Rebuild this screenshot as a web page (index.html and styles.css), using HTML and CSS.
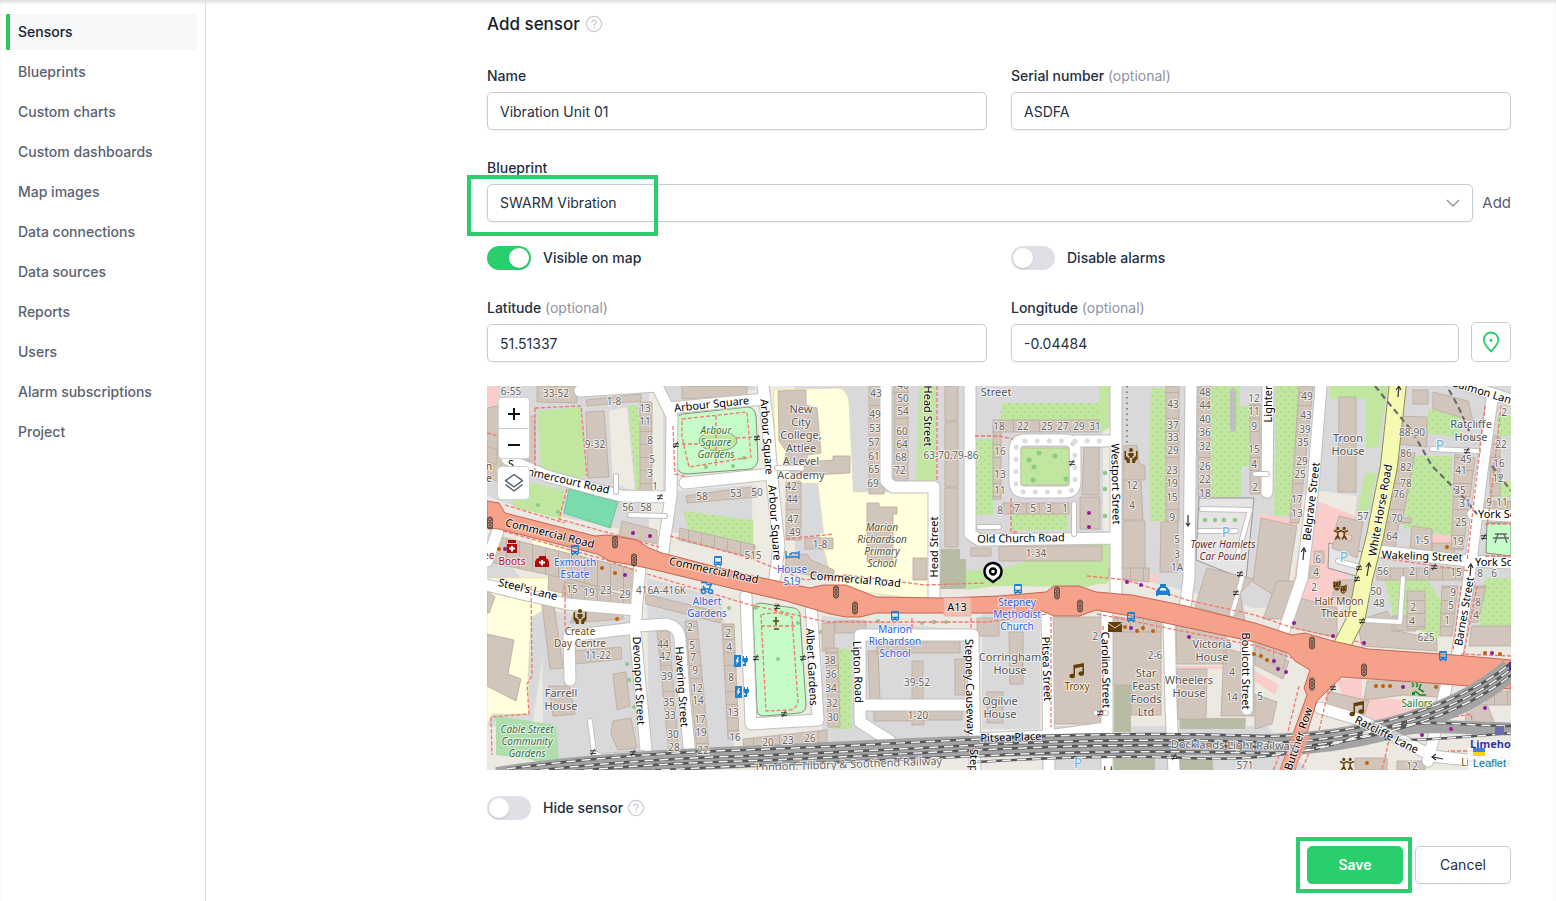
FILE: index.html
```html
<!DOCTYPE html>
<html lang="en">
<head>
<meta charset="utf-8">
<meta name="viewport" content="width=device-width, initial-scale=1">
<title>Add sensor</title>
<link rel="stylesheet" href="styles.css">
</head>
<body>
<div class="layout">
  <nav class="sidebar" aria-label="Settings">
    <a class="nav-link active" href="#sensors" aria-current="page">Sensors</a>
    <a class="nav-link" href="#blueprints">Blueprints</a>
    <a class="nav-link" href="#charts">Custom charts</a>
    <a class="nav-link" href="#dashboards">Custom dashboards</a>
    <a class="nav-link" href="#images">Map images</a>
    <a class="nav-link" href="#connections">Data connections</a>
    <a class="nav-link" href="#sources">Data sources</a>
    <a class="nav-link" href="#reports">Reports</a>
    <a class="nav-link" href="#users">Users</a>
    <a class="nav-link" href="#alarms">Alarm subscriptions</a>
    <a class="nav-link" href="#project">Project</a>
  </nav>
  <main class="content">
    <form class="sensor-form">
      <header class="form-header">
        <h1 class="title">Add sensor</h1>
        <svg class="help" viewBox="0 0 18 18" aria-hidden="true"><circle cx="9" cy="9" r="7.6"/><path d="M6.9 7.2a2.1 2.1 0 1 1 3.2 1.8c-.8.5-1.1.8-1.1 1.6M9 12.3v.9"/></svg>
      </header>

      <div class="columns">
        <div class="field">
          <label class="label" for="name">Name</label>
          <input class="input" id="name" type="text" value="Vibration Unit 01">
        </div>
        <div class="field">
          <label class="label" for="serial">Serial number <span class="optional">(optional)</span></label>
          <input class="input" id="serial" type="text" value="ASDFA">
        </div>
      </div>

      <div class="field">
        <label class="label" for="blueprint">Blueprint</label>
        <div class="select-row">
          <div class="select-wrap">
            <select class="input select" id="blueprint"><option>SWARM Vibration</option></select>
            <svg class="chevron" viewBox="0 0 14 8" aria-hidden="true"><path d="M1 1l6 6 6-6"/></svg>
            <span class="highlight highlight-select"></span>
          </div>
          <a class="add-link" href="#add">Add</a>
        </div>
      </div>

      <div class="columns toggles">
        <label class="toggle"><input class="switch" type="checkbox" role="switch" checked>Visible on map</label>
        <label class="toggle"><input class="switch" type="checkbox" role="switch">Disable alarms</label>
      </div>

      <div class="columns coordinates">
        <div class="field">
          <label class="label" for="lat">Latitude <span class="optional">(optional)</span></label>
          <input class="input" id="lat" type="text" value="51.51337">
        </div>
        <div class="locate-row">
          <div class="field">
            <label class="label" for="lng">Longitude <span class="optional">(optional)</span></label>
            <input class="input" id="lng" type="text" value="-0.04484">
          </div>
          <button class="locate" type="button" aria-label="Pick location"><svg class="pin-icon" viewBox="0 0 20 22" aria-hidden="true"><path d="M10 20.5C6.5 16.8 2.7 13.3 2.7 8.8a7.3 7.3 0 0 1 14.600 0c0 4.500-3.800 8-7.300 11.700z"/><circle cx="10" cy="9.200" r="1.500"/></svg></button>
        </div>
      </div>

      <div class="map">
<svg class="map-canvas" viewBox="0 0 1024 384" preserveAspectRatio="xMidYMid slice" role="img" aria-label="Street map">
<defs>
  <pattern id="garden" width="8" height="8" patternUnits="userSpaceOnUse"><rect width="8" height="8" fill="#c1e6a0"/><circle cx="2" cy="2" r=".6" fill="#7dbb69"/><circle cx="6" cy="6" r=".6" fill="#7dbb69"/></pattern>
  <pattern id="terraceV" width="40" height="13" patternUnits="userSpaceOnUse"><rect width="40" height="13" fill="#d1c5bc"/><path d="M0 6.500h40" stroke="#b9a99c" stroke-width=".8"/></pattern>
  <pattern id="terraceH" width="13" height="40" patternUnits="userSpaceOnUse"><rect width="13" height="40" fill="#d1c5bc"/><path d="M6.500 0v40" stroke="#b9a99c" stroke-width=".8"/></pattern>
  <g id="gate"><path d="M-3-1.200h6M-3 1.400h6M-1.600 3.200L1.600-3.200" fill="none" stroke="#222" stroke-width=".9"/></g>
  <g id="signal"><rect x="-2.300" y="-6" width="4.600" height="12" rx="2" fill="none" stroke="#4a4038" stroke-width="1"/><circle cy="-3.500" r="1.300" fill="none" stroke="#4a4038"/><circle r="1.300" fill="none" stroke="#4a4038"/><circle cy="3.500" r="1.300" fill="none" stroke="#4a4038"/></g>
  <g id="bus" fill="#1a80d2"><path fill-rule="evenodd" d="M-4-3.600Q-4-5-2.600-5h5.200Q4-5 4-3.600V4H3v1.300H1.600V4h-3.200v1.300H-3V4h-1zM-2.800-3v3.800h5.600V-3zM-2.800 2v1h1.300V2zM1.500 2v1h1.300V2z"/></g>
  <g id="music" fill="#623f07"><path d="M-3.500-5L7-7V3.500a2.800 2.200 0 1 1-1.600-1.900V-3.200L-2-1.800V6a2.800 2.200 0 1 1-1.500-1.900z"/></g>
  <g id="hands" fill="#623f07"><circle cy="-5" r="2"/><path d="M-2.600-2h5.200v3H1.500v2h-3V1h-1.100zM-6.500-4h1.500v5l3.800 3v4h-3V6l-2.300-2zM6.500-4H5v5L1.200 4v4h3V6l2.300-2z"/></g>
  <g id="people" fill="none" stroke="#623f07" stroke-width="1.500"><circle cx="-3.200" cy="-4.600" r=".8"/><circle cx="3.200" cy="-4.600" r=".8"/><path d="M-7-2.500L-3.200-.800 0-2.500 3.200-.800 7-2.500M-3.200-1.500v4l-2.500 4M-3.200 2.500l2 4M3.200-1.500v4l-2 4M3.200 2.500l2.500 4"/></g>
  <g id="charge" fill="#1a80d2"><path fill-rule="evenodd" d="M-7-6h7V6h-7zM-3.500-4L-5.700.700h1.500L-5 4.200-1.600-1h-1.500l1-3z"/><path d="M2-5h1v2h2v-2h1v2h1v3L5 2v3H2V3h1.500V2L1.500 0v-3H2z"/></g>
</defs>
<rect width="1024" height="384" fill="#d9d8da"/>

<g fill="#eeebe3">
  <path d="M0 110L18 117 60 128 170 150 190 105 188 30 260 5 285 0 300 120 303 180 420 198 600 188 660 195 768 222 800 220 812 110 835 105 870 110 855 230 1024 255V384H820L780 340H560V384H0V340L45 340 62 230 40 200 0 150z" opacity=".85"/>
  <path d="M162 0h14v170h-14zM268 0h40v200h-40zM616 40h10v105h-10zM122 25l18-4 8 85-22-10z"/>
</g>
<g fill="#d9d8da">
  <path d="M190 105l75-6v65l-80-18zM55 225l90 6 8 140-85 5-12-35zM160 192l75 20 12 150-85 8zM335 230l150 15v115l-120 5-85 5 55-25zM495 225h58v118h-58zM304 98h22l12 62-30-6zM790 102h5v-90h-5zM60 72v-72h40v72z"/>
</g>
<g fill="#ffffde" stroke="#e9e29b" stroke-width=".7">
  <path d="M287 4l66-2q8 4 9 14l5 90h75v108l-95-12-16-60-18-48-25-1z"/>
  <path d="M0 192h78l-3 20-31 20-3 58 1 38H5L0 340zM44 150l60 24-10 20-45-12z"/>
</g>
<path fill="#d9d8da" d="M304 97h27l6 50-30 6zM328 0h54v106h-16l-4-90q-1-10-9-14l-25 1z"/>
<g fill="#fbcdca">
  <path d="M0 0h12l-4 82H2l4-30H0zM823 112l45 18-8 70-12 30-48-8zM850 294l25-2v18l78 8v10l-50 6-15 15-20-4zM826 170h10l-10 40h-16zM645 188h25v8h-38zM612 270l25-20 30 10v5zM690 280h55v3h-55zM768 285l24 14-4 10-20-14zM945 149h24v10h-24z"/>
  <path d="M773 128l38 6v6l-40-4z"/>
</g>

<g fill="url(#garden)">
  <path d="M141 19h9l6 36 7 49-14 2zM196 125l70 9v26l-62-8zM349 263h16v80h-18zM515 17h97v17h-99zM489 53h17v76h-17zM525 128h56v16h-58zM664 2h17v133h-17l-2-50zM724 0h29v20h9v60h-8v31h-30zM789 0h26l-12 130h-16zM941 23l31 6v22l-31-3zM925 70h40v80l-48-8zM897 192h42l24 35-12 26-44-20zM998 192h26v60h-33zM1004 95h20v16h-20zM1010 30h14v20h-14z"/>
</g>
<g fill="#c1e6a0">
  <path d="M50 25l44-4 5 68-14 8-31-16z"/><path d="M28 92l50 13-4 28-48-12zM432 0h17v98h-20zM843 0h58l-10 62h-12V13h-36zM878 87h12l-9 38h-11zM478 185l34-2 106-28h4v40l-22 6-90-1-30 4-4-15z"/>
  <path d="M480 184h140v14H480zM612 0h10v42l-10 6z"/>
</g>
<path d="M9 330l60 9 4 46-30-12-34-4z" fill="#aedfab"/>
<path d="M82 103l49 13-8 26-46-15z" fill="#79dbae" stroke="#58b98c" stroke-width=".7"/>
<g fill="#b9bca4"><path d="M453 163h20v10h6v30h-26zM627 299h17v47h-17zM692 332h67l-1 11h-65zM627 371h41v13h-41zM684 371h42v13h-42z"/></g>

<g fill="#c6fcc9" stroke="#6f8a70" stroke-width=".9">
  <path d="M196 28l65-7q7 1 8 9l2 43q-1 8-7 10l-64 5q-9 0-11-9l-2-38q0-11 9-13z"/>
  <path d="M273 217l34 5q6 2 6 7l6 90q0 7-7 8l-35 3q-7 0-7-7l-4-98q0-7 7-8z"/>
  <path d="M1000 137h24v33l-25-3z"/>
</g>
<ellipse cx="231" cy="55" rx="19" ry="10" fill="#c1e6a0" stroke="#86a878"/>
<g fill="#8cc98a"><circle cx="219" cy="81" r="2"/><circle cx="246" cy="80" r="2"/><circle cx="257" cy="72" r="2"/><circle cx="51" cy="119" r="2"/><circle cx="71" cy="126" r="2"/><circle cx="102" cy="134" r="2"/><circle cx="123" cy="140" r="2"/><circle cx="269" cy="222" r="2"/><circle cx="291" cy="273" r="2"/><circle cx="311" cy="237" r="2"/><circle cx="333" cy="246" r="2"/><circle cx="140" cy="278" r="2"/><circle cx="142" cy="294" r="2"/><circle cx="147" cy="321" r="2"/><circle cx="242" cy="222" r="2"/><circle cx="391" cy="235" r="2"/><circle cx="435" cy="237" r="2"/><circle cx="447" cy="236" r="2"/><circle cx="459" cy="236" r="2"/><circle cx="618" cy="87" r="2.300"/><circle cx="618" cy="103" r="2.300"/><circle cx="618" cy="130" r="2.300"/></g>

<path fill="#e6e4e5" stroke="#777" stroke-width=".7" d="M712 112h55l-8 82-50-20zM842 157l40 11-6 24-35-10z"/>
<g fill="#d1c5bc" stroke="#b9a99c" stroke-width=".8">
  <path d="M0 22l14-3-5 60-9-4zM0 60l16 6-3 30-13-4zM50 0h40v17l-40-1zM36 30h12v45H36zM99 14l55-6v7l-54 5zM99 26l18-1 5 66-21 1zM135 135l35 9v14l-38-8zM195 0h65v10l-65 3zM199 110l56-8 15-1v10l-70 6z"/>
  <path d="M291 5l28-1v15l11 3 4 45-14 2v7l26-2v-4h17v17l-56 3-10-10 2-15-7-10zM380 117h12v4h18v7h-4v48H380zM318 152h28v11h-28zM300 170l20-2 4 6 23 10v9l-50-8z"/>
  <path d="M458 0h13v35h-13zM458 36h13v65h-13zM458 102h13v59h-13zM484 162h20v8h-20zM597 61h15v48h-17zM593 111h20v32h-20zM512 160h103v15h-103zM637 60l13-1 2 18 6 3v14h-22zM636 95h18l2 39h-20zM636 135h22v56h-22zM674 136h17v50h-18zM426 172h14v22h-14z"/>
  <path d="M852 11h17v95h-18zM774 132l36 8-9 55-16 13-19-12zM720 182l47 11-14 14 5 28-50-14zM852 130l24 6-6 36-25-10 4-12 15 5 1-5-17-6zM827 165h10v12h-10zM822 180h10v12h-10zM926 4h15v14h-15zM946 6l35 9 5 20-40-12zM955 190h20v-8h-22zM925 140l20 3v22l-22-3zM945 157h24l-2 10h-22zM910 30l30 1v30l-31-3z"/>
  <path d="M0 204l8 7-6 16H0zM0 248l27 6-6 34 13 5-5 22-29-15zM55 219h12l9 63-13 1zM90 222l46 3v8l-53 4zM87 265l47-4 1 12-46 5zM126 288l13-2 4 34-13 4zM126 335l18-3 6 30-19 2-7-16zM62 300h20l6 28-22 2zM158 208l78 19-3 10-74-19zM62 186l60 18-3 12-58-12z"/>
  <path d="M335 237h12v28h-12zM348 235h31v12h-31zM390 256h83v11h-83zM381 265h10l2 49h-10zM425 275h11v38h-11zM468 273h10v36h-10zM387 325h88v9h-38v5h-12v-4h-38zM490 232h22v18h-22zM500 306h16v31h-16zM522 246h14v52h-13z"/>
  <path d="M566 231h48v107h-46l-2-50zM626 230l48 9v90h-30v-30h-18zM689 240l50 5v33h-49zM690 283h30l-1 50h-28zM737 262l30 8v60h-33zM805 210l45 12v30l-50-12zM850 194h20l-5 22-20-5zM870 235l30-10 10 20 40 8v12l-75-5zM768 260l34 15-6 18-28-14zM768 308l22 8-5 22-17 5zM880 295h72v16l-35-2-40 5zM840 305l42 10-8 24-34-14zM905 230h24v15h-24zM985 240h39v20h-42zM980 318h20l8 20h-30zM868 372h32v12h-32zM910 375h28v9h-28zM790 195h26l-10 38h-30z"/>
</g>
<g fill="url(#terraceV)" stroke="#b9a99c" stroke-width=".8">
  <path d="M153 16h12v94h-12zM382 0h15v108h-15zM407 0h14v95h-14zM299 96h15v58h-15zM506 45h8v68h-8zM679 0h13v135h-13zM711 0h12v111h-12zM763 18h10v90h-10zM812 0h14l-14 137h-9zM904 62l24 5-12 65h8v5h-12l-4 28h-14zM968 68l20 4-12 92h-12zM170 245h12l10 124h-10zM198 235h12l12 130h-12zM235 238h12l5 115h-11zM339 262h12l2 79h-12zM1003 50h10v60h-10zM955 200h16l-6 50h-12zM985 200h14l-8 36h-10zM920 205h18v38h-18z"/>
</g>
<g fill="url(#terraceH)" stroke="#b9a99c" stroke-width=".8">
  <path d="M506 34h106v12H506zM516 117h66v11h-66zM193 142l75 17v13l-76-18zM77 196l75 16-3 12-74-12zM256 353l84-9v12l-83 10zM2 148l148 36-5 24-60-14-78-17zM622 182h40v14l-40-5zM995 115h29v10h-29zM890 182h90v12h-90zM626 232h48v14h-48zM768 250l32 18-4 15-28-14zM1003 305h21v14h-26z"/>
</g>

<g class="casing">
  <path d="M93 5L170 0 185 30 184 110 176 165M20 73L60 90 115 105 135 110 182 111M181 22l97-9M198 97l86-9M276 0l5 40 4 52 7 68-4 32M12 142L0 175M153 182l-3 33-2 30 7 75 5 55M0 199l35 9 45 10 68 6M148 242l-66 8 1 44M150 240l30-2q12 3 13 15l4 57 7 70"/>
  <path d="M259 210l5 128 67-4-7-118M373 249h113l2 137M373 249v87l30 19v12M373 319h113M399 0v95l7 6h41v112M483 0v148l9 6 137-2M629 0v213M704 0l-2 192-4 30M781 0l-1 106M834 0l-8 100-11 92-18 53M1005 14l-10 71-13 107-12 78M960 297l-19 78M970-4l54 18M891 165l91 10 42 2M986 128l38 2M560 225l2 160M488 353l72-3 60-8M620 225v160M682 233l2 87 3 66M760 245v78M833 322l37 11 41 19 34 18 79 9"/>
  <path d="M538 54h40q10 0 10 10v32q0 10-10 10h-40q-10 0-10-10V64q0-10 10-10zM588 55h38"/>
</g>
<g class="street">
  <path d="M93 5L170 0 185 30 184 110 176 165M20 73L60 90 115 105 135 110 182 111M181 22l97-9M198 97l86-9M276 0l5 40 4 52 7 68-4 32M12 142L0 175M153 182l-3 33-2 30 7 75 5 55M0 199l35 9 45 10 68 6M148 242l-66 8 1 44M150 240l30-2q12 3 13 15l4 57 7 70"/>
  <path d="M259 210l5 128 67-4-7-118M373 249h113l2 137M373 249v87l30 19v12M373 319h113M399 0v95l7 6h41v112M483 0v148l9 6 137-2M629 0v213M704 0l-2 192-4 30M781 0l-1 106M834 0l-8 100-11 92-18 53M1005 14l-10 71-13 107-12 78M960 297l-19 78M970-4l54 18M891 165l91 10 42 2M986 128l38 2M560 225l2 160M488 353l72-3 60-8M620 225v160M682 233l2 87 3 66M760 245v78M833 322l37 11 41 19 34 18 79 9"/>
  <path d="M538 54h40q10 0 10 10v32q0 10-10 10h-40q-10 0-10-10V64q0-10 10-10zM588 55h38"/>
</g>
<rect x="534" y="62" width="48" height="37" fill="#c1e6a0" stroke="#b9b9a9" stroke-width=".8"/>
<path d="M538 55h40q10 0 10 10v32q0 9-10 9h-40q-9 0-9-9V64q0-9 9-9zM588 55h34" fill="none" stroke="#dcdcdc" stroke-width="5" stroke-linecap="round" stroke-dasharray=".1 12"/>
<g fill="#8cc98a"><circle cx="552" cy="67" r="2.500"/><circle cx="568" cy="70" r="2.500"/><circle cx="542" cy="74" r="2.500"/><circle cx="547" cy="81" r="2.500"/><circle cx="546" cy="94" r="2.500"/><circle cx="579" cy="93" r="2.500"/><circle cx="718" cy="134" r="2.300"/><circle cx="728" cy="134" r="2.300"/><circle cx="737" cy="134" r="2.300"/><circle cx="748" cy="134" r="2.300"/></g>
<path class="minor-casing" d="M129 90v16M143 129l35 1M103 335l4 32 8 3 41-3M587 118v30M768 88h12M945 63l46 2M916 192l-3 44-35-2M755 192l-10 36M715 123l48 1-12 44M713 145h36M851 175l22 6M492 141h20M746 5v38M609 327h10M290 82h25"/>
<path class="minor" d="M129 90v16M143 129l35 1M103 335l4 32 8 3 41-3M587 118v30M768 88h12M945 63l46 2M916 192l-3 44-35-2M755 192l-10 36M715 123l48 1-12 44M713 145h36M851 175l22 6M492 141h20M609 327h10M290 82h25"/>

<g class="path">
  <path d="M48 22l46-2 6 70M48 22v62M0 47l12 3M80 103l-8 30 100 28M18 119l60 18M16 145l100 28 34 12M186 40l2 48 12 3M195 33l65-7 4 45-62 10-7-30zM229 30v50M195 58h17M249 52l20-1M183 150l80 22 55 22 40-5 80 10 60-2M160 188l100 30 80 18 160 0 60-8M299 153l48-5M450 0v95M488 50h24l14 3M524 112v34h6M600 190l40 4 60 20 68 15 38 13 70 15M610 228l160 32 35 12M564 231v110M616 240v90M44 200l1 90-5 8 2 30-38 3 1 38M78 200v48M274 229q16-5 31 2l6 85q-2 8-10 8l-22 1z"/>
  <path d="M274 240h34M289 217v10M425 232v10M484 232v12M890 162l20-130M894 172l90 13M998 20l-18 155M1014 20l-10 90-4 30M998 138h26M998 170h26M974 200l-8 66M990 200l-14 72M1024 270l-50-2M852 290l-12 20-8 35-18 40M812 300l-12 50-14 35M962 332l22-4 2 14M958 345h28v20h-25M903 350l-8 34"/>
</g>

<path d="M911-3l-9 83-14 70-11 43-7 37-17 33" fill="none" stroke="#8b9150" stroke-width="18"/>
<path d="M911-3l-9 83-14 70-11 43-7 37-17 33" fill="none" stroke="#f6f9b1" stroke-width="16"/>
<path d="M0 115L12 117 18 127 108 150 120 149 150 154 162 162 175 167 256 188 323 202 336 199H359L389 211 456 212 512 210 559 206 567 200H592L609 206 645 209 699 220 768 237 805 249 818 247 846 255 881 263 968 269 1024 274V303L928 296 855 291 845 300 830 315 808 384H793L820 309 817 302 823 284 808 275 801 267 768 256 655 232 609 224 592 230H567L555 225 512 227 389 227 373 231H359L343 228 299 215 256 205 160 182 150 180 123 175 110 168 12 143 0 142z" fill="#f6a18a" stroke="#bf5a49" stroke-width=".9"/>

<g fill="none">
  <path d="M10 392C100 378 190 374 256 371S430 362 512 360 690 358 768 359 960 340 1024 283" stroke="#a3a3a3" stroke-width="22"/>
  <path d="M680 360C800 366 850 350 900 344S970 342 1024 343" stroke="#a3a3a3" stroke-width="13"/>
  <g stroke="#565656" stroke-width="2.600">
    <path d="M20 383C100 372 190 366 256 364S430 356 512 352 690 347 768 350 960 330 1024 277"/>
    <path d="M30 387C110 377 190 372 256 370S430 362 512 358 690 353 768 356 960 336 1024 283"/>
    <path d="M40 390C120 381 190 377 256 375S430 367 512 363 690 358 768 361 960 341 1024 289"/>
    <path d="M50 392C130 386 190 383 256 380S430 373 512 369 690 365 768 367 850 352 900 342 970 340 1024 340"/>
    <path d="M490 376Q620 368 700 372T850 357 900 349 1024 347"/>
  </g>
  <g stroke="#f2f2f2" stroke-width="1.500" stroke-dasharray="9 6">
    <path d="M20 383C100 372 190 366 256 364S430 356 512 352 690 347 768 350 960 330 1024 277"/>
    <path stroke-dashoffset="7" d="M30 387C110 377 190 372 256 370S430 362 512 358 690 353 768 356 960 336 1024 283"/>
    <path stroke-dashoffset="3" d="M40 390C120 381 190 377 256 375S430 367 512 363 690 358 768 361 960 341 1024 289"/>
    <path stroke-dashoffset="11" d="M50 392C130 386 190 383 256 380S430 373 512 369 690 365 768 367 850 352 900 342 970 340 1024 340"/>
    <path stroke-dashoffset="5" d="M490 376Q620 368 700 372T850 357 900 349 1024 347"/>
  </g>
  <path d="M888 0l12 15 25 30 20 35 30 30 15 18M957-5l14 25 17 38M1005 80l19 25" stroke="#6b6b6b" stroke-width="2.200" stroke-dasharray="6 4"/>
</g>
<path d="M793 384l14-38 16 4-15 34z" fill="#f6a18a" opacity=".8"/>
<path d="M850 327l20 6 41 19 34 18 20 3" fill="none" stroke="#fff" stroke-width="10" opacity=".45"/>
<rect x="457" y="212" width="27" height="18" fill="#f3c0b2" stroke="#e7ada0" rx="1"/>

<g class="num">
<text><tspan x="24" y="9">6-55</tspan><tspan x="69" y="11">33-52</tspan><tspan x="127" y="19">1-8</tspan><tspan x="158" y="26">13</tspan><tspan x="158" y="39">11</tspan><tspan x="163" y="58">8</tspan><tspan x="165" y="77">5</tspan><tspan x="163" y="91">3</tspan><tspan x="168" y="104">1</tspan><tspan x="108" y="62">9-32</tspan><tspan x="141" y="125">56</tspan><tspan x="159" y="125">58</tspan><tspan x="215" y="114">58</tspan><tspan x="249" y="111">53</tspan><tspan x="270" y="110">50</tspan></text>
<text><tspan x="389" y="11">43</tspan><tspan x="388" y="32">49</tspan><tspan x="388" y="46">53</tspan><tspan x="387" y="60">57</tspan><tspan x="387" y="74">61</tspan><tspan x="387" y="87">65</tspan><tspan x="386" y="101">69</tspan><tspan x="416" y="3">46</tspan><tspan x="416" y="16">50</tspan><tspan x="416" y="29">54</tspan><tspan x="415" y="49">60</tspan><tspan x="415" y="62">64</tspan><tspan x="414" y="75">68</tspan><tspan x="413" y="88">72</tspan><tspan x="304" y="104">42</tspan><tspan x="305" y="117">44</tspan><tspan x="306" y="137">47</tspan><tspan x="308" y="150">49</tspan><tspan x="266" y="173">515</tspan><tspan x="333" y="162">1-8</tspan><tspan x="464" y="73">63-70,79-86</tspan></text>
<text><tspan x="512" y="44">18</tspan><tspan x="536" y="44">22</tspan><tspan x="560" y="44">25</tspan><tspan x="576" y="44">27</tspan><tspan x="592" y="44">29</tspan><tspan x="608" y="44">31</tspan><tspan x="513" y="69">16</tspan><tspan x="513" y="92">13</tspan><tspan x="513" y="108">11</tspan><tspan x="513" y="128">8</tspan><tspan x="530" y="126">7</tspan><tspan x="546" y="126">5</tspan><tspan x="562" y="126">3</tspan><tspan x="578" y="126">1</tspan><tspan x="549" y="171">1-34</tspan><tspan x="645" y="103">12</tspan><tspan x="645" y="123">4</tspan></text>
<text><tspan x="686" y="22">43</tspan><tspan x="686" y="43">37</tspan><tspan x="686" y="55">33</tspan><tspan x="686" y="68">29</tspan><tspan x="685" y="88">23</tspan><tspan x="685" y="101">19</tspan><tspan x="685" y="115">15</tspan><tspan x="685" y="135">9</tspan><tspan x="690" y="157">5</tspan><tspan x="690" y="172">3</tspan><tspan x="690" y="185">1A</tspan><tspan x="718" y="10">48</tspan><tspan x="718" y="23">44</tspan><tspan x="718" y="37">40</tspan><tspan x="718" y="50">36</tspan><tspan x="718" y="64">32</tspan><tspan x="718" y="84">26</tspan><tspan x="718" y="97">22</tspan><tspan x="718" y="111">18</tspan><tspan x="767" y="16">12</tspan><tspan x="767" y="29">11</tspan><tspan x="767" y="44">9</tspan><tspan x="767" y="67">15</tspan><tspan x="767" y="82">4</tspan><tspan x="768" y="105">2</tspan></text>
<text><tspan x="820" y="14">49</tspan><tspan x="819" y="33">43</tspan><tspan x="818" y="47">39</tspan><tspan x="816" y="60">35</tspan><tspan x="815" y="79">29</tspan><tspan x="813" y="92">25</tspan><tspan x="810" y="117">17</tspan><tspan x="810" y="131">13</tspan><tspan x="876" y="134">57</tspan><tspan x="831" y="177">6</tspan><tspan x="829" y="190">4</tspan><tspan x="925" y="50">88-90</tspan><tspan x="919" y="71">86</tspan><tspan x="919" y="85">82</tspan><tspan x="919" y="101">78</tspan><tspan x="912" y="112">76</tspan><tspan x="910" y="136">70</tspan><tspan x="905" y="154">64</tspan><tspan x="896" y="189">56</tspan><tspan x="979" y="77">45</tspan><tspan x="974" y="88">41</tspan><tspan x="973" y="108">35</tspan><tspan x="978" y="121">31</tspan><tspan x="974" y="140">25</tspan><tspan x="971" y="159">19</tspan><tspan x="935" y="158">1-5</tspan><tspan x="925" y="189">2</tspan><tspan x="939" y="189">6</tspan><tspan x="969" y="190">15</tspan><tspan x="993" y="191">8</tspan><tspan x="1007" y="191">6</tspan><tspan x="1017" y="30">2</tspan><tspan x="1014" y="62">22</tspan><tspan x="1012" y="81">16</tspan><tspan x="1011" y="96">12</tspan><tspan x="1002" y="120">9</tspan><tspan x="1015" y="120">11</tspan></text>
<text><tspan x="85" y="207">15</tspan><tspan x="102" y="210">19</tspan><tspan x="119" y="208">23</tspan><tspan x="138" y="212">29</tspan><tspan x="174" y="208">416A-416K</tspan><tspan x="203" y="245">2</tspan><tspan x="205" y="263">5</tspan><tspan x="206" y="275">7</tspan><tspan x="208" y="288">9</tspan><tspan x="210" y="306">12</tspan><tspan x="211" y="318">14</tspan><tspan x="213" y="337">17</tspan><tspan x="214" y="350">19</tspan><tspan x="216" y="368">22</tspan><tspan x="176" y="262">44</tspan><tspan x="178" y="274">42</tspan><tspan x="180" y="294">39</tspan><tspan x="182" y="320">35</tspan><tspan x="183" y="333">33</tspan><tspan x="186" y="352">30</tspan><tspan x="187" y="365">28</tspan><tspan x="241" y="251">2</tspan><tspan x="242" y="265">4</tspan><tspan x="244" y="295">8</tspan><tspan x="246" y="330">13</tspan><tspan x="248" y="355">16</tspan><tspan x="111" y="273">11-22</tspan></text>
<text><tspan x="343" y="278">38</tspan><tspan x="344" y="292">36</tspan><tspan x="344" y="306">34</tspan><tspan x="345" y="321">32</tspan><tspan x="346" y="335">30</tspan><tspan x="281" y="360">20</tspan><tspan x="301" y="358">23</tspan><tspan x="323" y="356">26</tspan><tspan x="430" y="300">39-52</tspan><tspan x="431" y="333">1-20</tspan><tspan x="608" y="254">2</tspan><tspan x="668" y="273">2-6</tspan><tspan x="745" y="290">4</tspan><tspan x="745" y="315">14</tspan><tspan x="758" y="383">571</tspan><tspan x="827" y="205">2</tspan><tspan x="889" y="209">50</tspan><tspan x="892" y="221">48</tspan><tspan x="926" y="225">2</tspan><tspan x="925" y="239">4</tspan><tspan x="960" y="238">1</tspan><tspan x="964" y="223">5</tspan><tspan x="966" y="210">9</tspan><tspan x="991" y="220">8</tspan><tspan x="989" y="233">4</tspan><tspan x="939" y="255">625</tspan><tspan x="773" y="314">5</tspan><tspan x="925" y="384">12</tspan></text>
</g>

<g class="place">
<text><tspan x="314" y="27">New</tspan><tspan x="314" y="40">City</tspan><tspan x="314" y="53">College,</tspan><tspan x="314" y="66">Attlee</tspan><tspan x="314" y="79">A Level</tspan><tspan x="314" y="93">Academy</tspan></text>
<text x="509" y="10">Street</text>
<text><tspan x="861" y="56">Troon</tspan><tspan x="861" y="69">House</tspan></text>
<text><tspan x="984" y="42">Ratcliffe</tspan><tspan x="984" y="55">House</tspan></text>
<text><tspan x="74" y="311">Farrell</tspan><tspan x="74" y="324">House</tspan></text>
<text><tspan x="523" y="275">Corringham</tspan><tspan x="523" y="288">House</tspan></text>
<text><tspan x="513" y="319">Ogilvie</tspan><tspan x="513" y="332">House</tspan></text>
<text><tspan x="725" y="262">Victoria</tspan><tspan x="725" y="275">House</tspan></text>
<text><tspan x="702" y="298">Wheelers</tspan><tspan x="702" y="311">House</tspan></text>
<text><tspan x="659" y="291">Star</tspan><tspan x="659" y="304">Feast</tspan><tspan x="659" y="317">Foods</tspan><tspan x="659" y="330">Ltd</tspan></text>
</g>
<g class="poi">
<text class="italic school"><tspan x="395" y="145">Marion</tspan><tspan x="395" y="157">Richardson</tspan><tspan x="395" y="169">Primary</tspan><tspan x="395" y="181">School</tspan></text>
<text class="italic maroon"><tspan x="736" y="162">Tower Hamlets</tspan><tspan x="736" y="174">Car Pound</tspan></text>
<text class="italic community"><tspan x="40" y="347">Cable Street</tspan><tspan x="40" y="359">Community</tspan><tspan x="40" y="371">Gardens</tspan></text>
<text class="italic park"><tspan x="229" y="48">Arbour</tspan><tspan x="229" y="60">Square</tspan><tspan x="229" y="72">Gardens</tspan></text>
<text class="transit"><tspan x="88" y="180">Exmouth</tspan><tspan x="88" y="192">Estate</tspan><tspan x="305" y="187">House</tspan><tspan x="305" y="199">519</tspan><tspan x="220" y="219">Albert</tspan><tspan x="220" y="231">Gardens</tspan><tspan x="408" y="247">Marion</tspan><tspan x="408" y="259">Richardson</tspan><tspan x="408" y="271">School</tspan><tspan x="530" y="220">Stepney</tspan><tspan x="530" y="232">Methodist</tspan><tspan x="530" y="244">Church</tspan></text>
<text class="health"><tspan x="25" y="179">Boots</tspan><tspan x="2" y="173">ee</tspan></text>
<text class="amenity"><tspan x="93" y="249">Create</tspan><tspan x="93" y="261">Day Centre</tspan><tspan x="852" y="219">Half Moon</tspan><tspan x="852" y="231">Theatre</tspan><tspan x="590" y="304">Troxy</tspan><tspan x="2" y="84">n</tspan><tspan x="2" y="96">e</tspan><tspan x="1000" y="380">Limehouse</tspan></text>
<text class="leisure" x="930" y="321">Sailors</text>
<text class="station" x="983" y="362">Limehouse</text>
</g>

<g class="road-name">
<text transform="translate(79 98) rotate(13)">mmercourt Road</text>
<text x="24" y="82">S</text>
<text class="major" transform="translate(62 151) rotate(14)">Commercial Road</text>
<text class="major" transform="translate(226 188) rotate(12)">Commercial Road</text>
<text class="major" transform="translate(368 197) rotate(5)">Commercial Road</text>
<text transform="translate(225 22) rotate(-6)">Arbour Square</text>
<text transform="translate(276 51) rotate(86)">Arbour Square</text>
<text transform="translate(284 137) rotate(86)">Arbour Square</text>
<text transform="translate(437 30) rotate(90)">Head Street</text>
<text transform="translate(451 161) rotate(-90)">Head Street</text>
<text transform="translate(625 98) rotate(89)">Westport Street</text>
<text transform="translate(534 156) rotate(-1)">Old Church Road</text>
<text transform="translate(785 18) rotate(-90)">Lighter</text>
<text transform="translate(828 116) rotate(-83)">Belgrave Street</text>
<text transform="translate(897 125) rotate(-80)">White Horse Road</text>
<text transform="translate(935 174) rotate(2)">Wakeling Street</text>
<text transform="translate(997 10) rotate(17)">Salmon Lane</text>
<text x="1022" y="132">York Square</text>
<text x="1019" y="180">York Square</text>
<text transform="translate(981 226) rotate(-80)">Barnes Street</text>
<text transform="translate(40 207) rotate(14)">Steel's Lane</text>
<text transform="translate(148 295) rotate(87)">Devonport Street</text>
<text transform="translate(191 301) rotate(86)">Havering Street</text>
<text transform="translate(321 281) rotate(87)">Albert Gardens</text>
<text transform="translate(367 286) rotate(88)">Lipton Road</text>
<text transform="translate(479 301) rotate(89)">Stepney Causeway</text>
<text transform="translate(483 396) rotate(90)">Stepney Way</text>
<text transform="translate(556 283) rotate(88)">Pitsea Street</text>
<text transform="translate(615 284) rotate(89)">Caroline Street</text>
<text transform="translate(625 383) rotate(-90)">C</text>
<text transform="translate(524 355) rotate(-2)">Pitsea Place</text>
<text transform="translate(755 285) rotate(90)">Boulcott Street</text>
<text transform="translate(815 354) rotate(-71)">Butcher Row</text>
<text transform="translate(898 352) rotate(27)">Ratcliffe Lane</text>
<text x="470" y="225">A13</text>
</g>
<g class="rail-name"><text transform="translate(362 382) rotate(-2)">London, Tilbury &amp; Southend Railway</text><text transform="translate(746 363) rotate(1)">Docklands Light Railway</text></g>

<use href="#signal" x="3" y="137"/><use href="#signal" x="128" y="156"/><use href="#signal" x="147" y="174"/><use href="#signal" x="349" y="206"/><use href="#signal" x="368" y="222"/><use href="#signal" x="570" y="207"/><use href="#signal" x="593" y="220"/><use href="#signal" x="825" y="257"/><use href="#signal" x="877" y="284"/><use href="#signal" x="825" y="298"/>
<use href="#bus" x="88" y="164"/><use href="#bus" x="231" y="175"/><use href="#bus" x="408" y="230"/><use href="#bus" x="531" y="203"/><use href="#bus" x="644" y="231"/><use href="#bus" x="956" y="270"/>
<use href="#gate" x="189" y="59"/><use href="#gate" x="173" y="111"/><use href="#gate" x="270" y="52"/><use href="#gate" x="585" y="77"/><use href="#gate" x="753" y="188"/><use href="#gate" x="980" y="65"/><use href="#gate" x="997" y="151"/><use href="#gate" x="872" y="182"/><use href="#gate" x="947" y="181"/><use href="#gate" x="870" y="193"/><use href="#gate" x="875" y="235"/><use href="#gate" x="846" y="302"/><use href="#gate" x="106" y="366"/><use href="#gate" x="146" y="367"/><use href="#gate" x="290" y="221"/><use href="#gate" x="269" y="272"/><use href="#gate" x="316" y="272"/><use href="#gate" x="297" y="328"/><use href="#gate" x="613" y="327"/><use href="#gate" x="749" y="207"/><use href="#gate" x="687" y="371"/>
<use href="#music" x="590" y="284"/><use href="#music" x="870" y="322"/>
<use href="#hands" x="644" y="69"/><use href="#hands" x="93" y="230"/>
<use href="#people" x="854" y="147"/><use href="#people" x="860" y="378"/>
<use href="#charge" x="254" y="275"/><use href="#charge" x="255" y="306"/>
<g fill="#b4090c"><path d="M21 154h8v3h-8zM20 158h10v9H20z"/><path d="M48 181v-5q1-4 4-4h6q3 0 4 4v5zM52 170h7v2h-7z"/></g>
<path d="M24 160h2v1.500h2v2h-2v2h-2v-2h-2v-2h2zM54 174h2v1.500h2v2h-2v2h-2v-2h-2v-2h2z" fill="#fff"/>
<path d="M299 165v8M299 171h13v-4h-8M312 173v-8M302 168h3" fill="none" stroke="#1a80d2" stroke-width="1.300"/>
<g fill="none" stroke="#1a80d2" stroke-width="1.500"><circle cx="216.500" cy="205.500" r="2"/><circle cx="223.500" cy="205.500" r="2"/><path d="M214 196.500h5l1 2h5M216 200l2 3h4l2-4M217 203h-3"/></g>
<path d="M669 210v-5l3-4h1v-3h6v3h1l3 4v5h-2v-1h-10v1z" fill="#1a80d2"/><path d="M672.500 204.500l1.500-2.500h4l1.500 2.500z" fill="#fff"/>
<rect x="621" y="236" width="14" height="10" fill="#623f07"/><path d="M621 237l7 5 7-5" fill="none" stroke="#ead9c4"/>
<path d="M846 195q4 2 8-1v7q-2 4-4 4t-4-4zM853 199q4 2 7-1v6q-2 4-4 4t-3-4z" fill="#623f07" stroke="#d1c5bc" stroke-width=".6"/><path d="M848 198h1M851 198h1M848 202q2-2 4 0M855 202h1M858 202h1M855 205q2 2 3 0" fill="none" stroke="#d1c5bc" stroke-width=".8"/>
<g class="parking"><text x="739" y="151">P</text><text x="857" y="176">P</text><text x="953" y="64">P</text><text x="591" y="382">P</text></g>
<path d="M925 297q3 2 0 4M929 297q3 2 0 4M934 298l-2 5 5 3M928 305l5 4 6 0" fill="none" stroke="#0b8a1f" stroke-width="1.500"/><rect x="925" y="306" width="3" height="3" fill="#0b8a1f"/>
<path d="M1008 148h12M1006 152h16M1011 148l-3 9M1017 148l3 9" stroke="#666" stroke-width="1.300"/>
<path d="M289 231v8M286 235h6M287 243h5" stroke="#623f07" stroke-width="1.500"/>
<g fill="none" stroke="#333" stroke-width="1.200"><path d="M701 129v11M699 137l2 3 2-3M816 174l1-11M814 166l3-4 2 4M880 190l2-12M879 181l3-4 2 4M911 11l1-11M909 4l3-4 2 4M983 190l1-11M981 182l3-4 2 4M956 373l-10-2M949 368l-4 3 4 3"/></g>
<g fill="#931a9c"><circle cx="146" cy="147" r="2"/><circle cx="163" cy="150" r="2"/><circle cx="18" cy="163" r="2"/><circle cx="138" cy="189" r="2"/><circle cx="602" cy="127" r="2"/><circle cx="602" cy="141" r="2"/><circle cx="640" cy="196" r="2"/><circle cx="654" cy="199" r="2"/><circle cx="644" cy="242" r="2"/><circle cx="702" cy="251" r="2"/><circle cx="807" cy="237" r="2"/><circle cx="846" cy="250" r="2"/><circle cx="877" cy="257" r="2"/><circle cx="787" cy="275" r="2"/><circle cx="791" cy="283" r="2"/><circle cx="799" cy="286" r="2"/><circle cx="916" cy="301" r="2"/><circle cx="1005" cy="267" r="2"/><circle cx="998" cy="322" r="2"/><circle cx="964" cy="343" r="2"/><circle cx="935" cy="349" r="2"/></g>
<g fill="#c15f0a"><circle cx="12" cy="163" r="2"/><circle cx="115" cy="182" r="2"/><circle cx="128" cy="187" r="2"/><circle cx="130" cy="233" r="2"/><circle cx="638" cy="241" r="2"/><circle cx="650" cy="245" r="2"/><circle cx="656" cy="242" r="2"/><circle cx="666" cy="245" r="2"/><circle cx="767" cy="268" r="2"/><circle cx="774" cy="270" r="2"/><circle cx="780" cy="274" r="2"/><circle cx="889" cy="300" r="2"/><circle cx="896" cy="300" r="2"/><circle cx="903" cy="300" r="2"/><circle cx="949" cy="301" r="2"/><circle cx="998" cy="267" r="2"/><circle cx="1013" cy="268" r="2"/><circle cx="960" cy="161" r="2"/><circle cx="880" cy="377" r="2"/></g>
<path d="M640 0v60" stroke="#666" stroke-width="1.500" stroke-dasharray="1.500 4"/>
<rect x="1008" y="340" width="9" height="9" fill="#6b6bab"/><rect x="1022" y="276" width="4" height="8" fill="#3636a4"/>
<path d="M506 196l-4-3a8.500 8.500 0 1 1 8 0z" fill="#fff" stroke="#000" stroke-width="2.400"/><circle cx="506" cy="185.500" r="3" fill="#fff" stroke="#000" stroke-width="2.400"/>
</svg>
        <div class="zoom">
          <button class="zoom-button" type="button" aria-label="Zoom in"><svg class="zoom-icon" viewBox="0 0 14 14"><path d="M7 1v12M1 7h12"/></svg></button>
          <button class="zoom-button" type="button" aria-label="Zoom out"><svg class="zoom-icon" viewBox="0 0 14 14"><path d="M1 7h12"/></svg></button>
        </div>
        <button class="layers" type="button" aria-label="Layers"><svg class="layers-icon" viewBox="0 0 20 20"><path d="M10 1.500l8.500 6.200L10 14 1.500 7.700zM1.500 11.500L10 18l8.500-6.500"/></svg></button>
        <a class="attribution" href="#leaflet"><svg class="flag" viewBox="0 0 12 8" aria-hidden="true"><path fill="#4c7be1" d="M0 0h12v4H0z"/><path fill="#ffd500" d="M0 4h12v4H0z"/></svg>Leaflet</a>
      </div>

      <div class="hide-row">
        <label class="toggle"><input class="switch" type="checkbox" role="switch">Hide sensor</label>
        <svg class="help" viewBox="0 0 18 18" aria-hidden="true"><circle cx="9" cy="9" r="7.600"/><path d="M6.900 7.200a2.100 2.100 0 1 1 3.200 1.800c-.8.500-1.100.8-1.100 1.600M9 12.300v.9"/></svg>
      </div>

      <div class="actions">
        <div class="save-wrap"><button class="button save" type="submit">Save</button><span class="highlight highlight-save"></span></div>
        <button class="button" type="button">Cancel</button>
      </div>
    </form>
  </main>
</div>
</body>
</html>
```
FILE: styles.css
```css
* { box-sizing: border-box; }
body { margin: 0; background: #fff; color: #252f3f; font: 500 14px/20px Inter, "Liberation Sans", sans-serif; }
button, input, select { font: inherit; color: inherit; }
.layout { display: flex; min-height: 100vh; box-shadow: inset 0 4px 4px -2px #d8d8d8; }
.sidebar { display: flex; flex: 0 0 206px; flex-direction: column; gap: 4px; padding: 14px 8px 14px 6px; border-right: 1px solid #dcdde1; }
.nav-link { padding: 8px; border-left: 4px solid transparent; color: #5a6170; text-decoration: none; }
.nav-link.active { border-color: #2bc760; border-radius: 1px; background: #f7f8fa; color: #161e2e; }
.content { flex: 1; min-width: 0; padding: 10px 45px 16px 281px; }
.sensor-form { display: flex; flex-direction: column; }
.form-header { display: flex; align-items: center; gap: 5px; margin-bottom: 28px; }
.title { margin: 0; color: #161e2e; font-size: 17px; font-weight: 500; line-height: 28px; }
.help { width: 18px; height: 18px; fill: none; stroke: #c9ccd4; stroke-width: 1.3; stroke-linecap: round; }
.columns { display: grid; grid-template-columns: 1fr 1fr; gap: 24px; margin-bottom: 28px; }
.field { display: flex; flex: 1; min-width: 0; flex-direction: column; gap: 6px; }
.optional { color: #8d93a1; font-weight: 400; }
.input { width: 100%; height: 38px; padding: 0 12px; border: 1px solid #c9ccd6; border-radius: 5px; background: #fff; box-shadow: 0 1px 2px #0000000d; font-weight: 400; }
.select-row { display: flex; align-items: center; gap: 9px; margin-bottom: 24px; }
.select-wrap { position: relative; flex: 1; }
.select { display: block; appearance: none; }
.chevron { position: absolute; top: 15px; right: 13px; width: 14px; height: 8px; fill: none; stroke: #8d93a1; stroke-width: 1.4; pointer-events: none; }
.add-link { color: #5a6170; font-size: 15px; font-weight: 400; text-decoration: none; }
.highlight { position: absolute; border: 4px solid #29ce6d; pointer-events: none; }
.highlight-select { top: -9px; left: -20px; width: 191px; height: 61px; }
.highlight-save { top: -9px; right: -9px; bottom: -9px; left: -11px; }
.toggle { display: flex; align-items: center; gap: 12px; }
.switch { appearance: none; width: 44px; height: 24px; margin: 0; padding: 2px; border-radius: 12px; background: #dfe0e6; }
.switch::before { content: ""; display: block; width: 20px; height: 20px; border-radius: 50%; background: #fff; box-shadow: 0 1px 2px #0002; }
.switch:checked { background: #29ce6d; }
.switch:checked::before { margin-left: auto; }
.coordinates { align-items: end; margin-bottom: 24px; }
.locate-row { display: flex; align-items: flex-end; gap: 12px; }
.locate { display: grid; width: 40px; height: 40px; padding: 0; place-items: center; border: 1px solid #c9ccd6; border-radius: 5px; background: #fff; }
.pin-icon { width: 20px; height: 22px; fill: none; stroke: #29ce6d; stroke-width: 1.8; }
.pin-icon circle { fill: #29ce6d; stroke: none; }
.map { position: relative; height: 384px; overflow: hidden; }
.map-canvas { display: block; width: 100%; height: 100%; font-family: "Noto Sans", sans-serif; font-weight: 400; }
.map text { text-anchor: middle; paint-order: stroke; stroke: #ffffffb3; stroke-width: 2px; stroke-linejoin: round; }
.casing, .street, .minor, .minor-casing, .path { fill: none; stroke-linecap: round; stroke-linejoin: round; }
.casing { stroke: #c2c0be; stroke-width: 13px; }
.street { stroke: #fff; stroke-width: 11px; }
.minor-casing { stroke: #c2c0be; stroke-width: 6px; }
.minor { stroke: #fff; stroke-width: 4px; }
.path { stroke: #f4766b; stroke-width: 1.3px; stroke-dasharray: 4 2; stroke-linecap: butt; }
.num { fill: #68645f; font-size: 10px; }
.place { fill: #555; font-size: 11px; }
.poi { font-size: 10px; }
.italic { font-style: italic; }
.school { fill: #55552a; }
.maroon { fill: #6b2b2b; }
.community { fill: #3c6b43; }
.park { fill: #267a35; }
.transit { fill: #2a5fe0; }
.health { fill: #b4090c; }
.amenity { fill: #734a08; }
.leisure { fill: #16801f; }
.map .station { fill: #3636a4; font-weight: 700; font-size: 11px; text-anchor: start; }
.road-name { fill: #000; font-size: 11px; }
.rail-name { fill: #666; font-size: 11px; }
.parking { fill: #6eb4dd; font-size: 14px; }
.zoom { position: absolute; top: 11px; left: 11px; display: flex; width: 32px; flex-direction: column; border: 1px solid #aaa8; border-radius: 4px; background: #fff; }
.zoom-button { display: grid; height: 30px; padding: 2px 0 0; place-items: center; border: 0; background: none; }
.zoom-button + .zoom-button { border-top: 1px solid #ccc; }
.zoom-icon { width: 14px; height: 14px; stroke: #111; stroke-width: 2; }
.layers { position: absolute; top: 80px; left: 10px; display: grid; width: 33px; height: 34px; padding: 0; place-items: center; border: 1px solid #aaa8; border-radius: 5px; background: #fff; }
.layers-icon { width: 20px; height: 20px; fill: none; stroke: #596273; stroke-width: 1.5; stroke-linejoin: round; }
.attribution { position: absolute; right: 0; bottom: 0; width: 43px; padding: 0 5px; background: #ffffffcc; color: #0078a8; font: 11px/14px "Liberation Sans", Arial, sans-serif; text-decoration: none; }
.flag { display: block; width: 12px; height: 8px; }
.hide-row { display: flex; align-items: center; gap: 4px; margin-top: 26px; }
.actions { display: flex; justify-content: flex-end; gap: 12px; margin-top: 26px; }
.save-wrap { position: relative; }
.button { width: 96px; height: 38px; padding: 0; border: 1px solid #c9ccd6; border-radius: 5px; background: #fff; box-shadow: 0 1px 2px #0000000d; font-weight: 400; }
.save { display: block; border-color: #29ce6d; background: #29ce6d; color: #fff; font-weight: 600; }
```
